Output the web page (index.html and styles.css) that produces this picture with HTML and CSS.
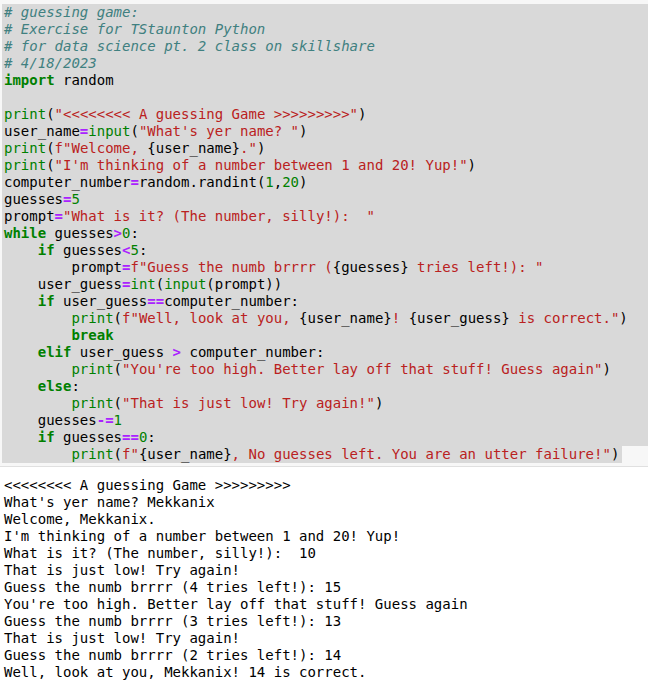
FILE: index.html
```html
<!DOCTYPE html>
<html>
<head>
<meta charset="utf-8">
<link rel="stylesheet" href="styles.css">
</head>
<body>
<div class="cell">
<div class="sel"><pre class="code"><span class="c"># guessing game:</span>
<span class="c"># Exercise for TStaunton Python</span>
<span class="c"># for data science pt. 2 class on skillshare</span>
<span class="c"># 4/18/2023</span>
<span class="k">import</span> random

<span class="b">print</span>(<span class="s">"&lt;&lt;&lt;&lt;&lt;&lt;&lt;&lt; A guessing Game &gt;&gt;&gt;&gt;&gt;&gt;&gt;&gt;&gt;"</span>)
user_name<span class="o">=</span><span class="b">input</span>(<span class="s">"What's yer name? "</span>)
<span class="b">print</span>(<span class="s">f"Welcome, </span>{user_name}<span class="s">."</span>)
<span class="b">print</span>(<span class="s">"I'm thinking of a number between 1 and 20! Yup!"</span>)
computer_number<span class="o">=</span>random.randint(<span class="n">1</span>,<span class="n">20</span>)
guesses<span class="o">=</span><span class="n">5</span>
prompt<span class="o">=</span><span class="s">"What is it? (The number, silly!):  "</span>
<span class="k">while</span> guesses<span class="o">&gt;</span><span class="n">0</span>:
    <span class="k">if</span> guesses<span class="o">&lt;</span><span class="n">5</span>:
        prompt<span class="o">=</span><span class="s">f"Guess the numb brrrr (</span>{guesses}<span class="s"> tries left!): "</span>
    user_guess<span class="o">=</span><span class="b">int</span>(<span class="b">input</span>(prompt))
    <span class="k">if</span> user_guess<span class="o">==</span>computer_number:
        <span class="b">print</span>(<span class="s">f"Well, look at you, </span>{user_name}<span class="s">! </span>{user_guess}<span class="s"> is correct."</span>)
        <span class="k">break</span>
    <span class="k">elif</span> user_guess <span class="o">&gt;</span> computer_number:
        <span class="b">print</span>(<span class="s">"You're too high. Better lay off that stuff! Guess again"</span>)
    <span class="k">else</span>:
        <span class="b">print</span>(<span class="s">"That is just low! Try again!"</span>)
    guesses<span class="o">-=</span><span class="n">1</span>
    <span class="k">if</span> guesses<span class="o">==</span><span class="n">0</span>:</pre></div>
<pre class="code"><span class="last">        <span class="b">print</span>(<span class="s">f"</span>{user_name}<span class="s">, No guesses left. You are an utter failure!"</span>)</span></pre>
</div>
<pre class="out">&lt;&lt;&lt;&lt;&lt;&lt;&lt;&lt; A guessing Game &gt;&gt;&gt;&gt;&gt;&gt;&gt;&gt;&gt;
What's yer name? Mekkanix
Welcome, Mekkanix.
I'm thinking of a number between 1 and 20! Yup!
What is it? (The number, silly!):  10
That is just low! Try again!
Guess the numb brrrr (4 tries left!): 15
You're too high. Better lay off that stuff! Guess again
Guess the numb brrrr (3 tries left!): 13
That is just low! Try again!
Guess the numb brrrr (2 tries left!): 14
Well, look at you, Mekkanix! 14 is correct.</pre>
</body>
</html>
```
FILE: styles.css
```css
html, body {
  margin: 0;
  padding: 0;
  background: #ffffff;
}
pre {
  margin: 0;
  font-family: "DejaVu Sans Mono", monospace;
  font-size: 14px;
  line-height: 17px;
  color: #000;
}
.cell {
  background: #f7f7f7;
  padding: 4px 0 3px 2px;
  border-bottom: 1px solid #e0e0e0;
}
.sel {
  background: #d9d9d9;
}
.code {
  padding-left: 2px;
}
.last {
  display: inline-block;
  background: #d9d9d9;
  margin-left: -2px;
  padding-left: 2px;
  padding-right: 3px;
}
.c { color: #408080; font-style: italic; }
.k { color: #008000; font-weight: bold; }
.b { color: #008000; }
.s { color: #ba2121; }
.n { color: #008000; }
.o { color: #aa22ff; font-weight: bold; }
.out {
  padding: 10px 0 0 4px;
}
```
